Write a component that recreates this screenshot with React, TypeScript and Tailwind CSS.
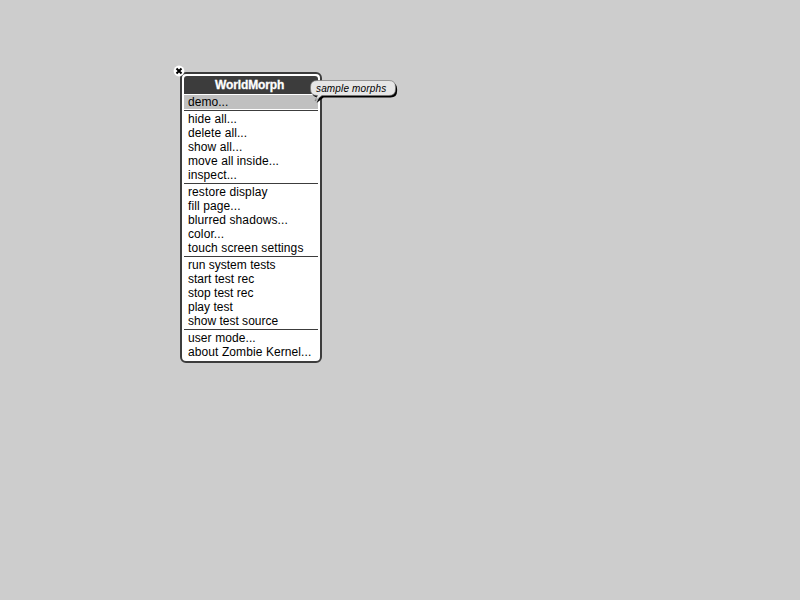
const groups = [
  ["demo..."],
  ["hide all...", "delete all...", "show all...", "move all inside...", "inspect..."],
  ["restore display", "fill page...", "blurred shadows...", "color...", "touch screen settings"],
  ["run system tests", "start test rec", "stop test rec", "play test", "show test source"],
  ["user mode...", "about Zombie Kernel..."],
];

const spacing = [
  "tracking-[0.04px]",
  "tracking-[0.09px]",
  "tracking-[0.1px]",
  "tracking-[0.01px]",
  "tracking-[0.09px]",
];

function CloseHandle() {
  return (
    <svg className="absolute -left-[7px] -top-[7px]" width="12" height="12" viewBox="0 0 12 12">
      <circle cx="6" cy="6" r="5.4" fill="#fff" />
      <path d="M3.5 3.5 8.5 8.5M8.5 3.5 3.5 8.5" stroke="#000" strokeWidth="2" />
    </svg>
  );
}

const bubble =
  "M7 1.5H79Q85.5 1.5 85.5 8V10Q85.5 16.5 79 16.5H12L5 22L7.5 16.5H7Q.5 16.5 .5 10V8Q.5 1.5 7 1.5Z";

function Hint() {
  return (
    <div className="absolute left-[310px] top-[79px] h-[26px] w-[90px]">
      <svg className="absolute left-0 top-0" width="90" height="26" viewBox="0 0 90 26">
        <path d={bubble} fill="#000" transform="translate(1.6 2.1)" />
        <path d={bubble} fill="#e6e6e6" stroke="#777" strokeWidth=".7" />
      </svg>
      <div className="relative whitespace-nowrap pl-[6px] pt-[3px] text-[10px] italic leading-[13px] tracking-[0.15px]">
        sample morphs
      </div>
    </div>
  );
}

export default function App() {
  return (
    <main className="relative h-[600px] w-[800px] overflow-hidden bg-[#cdcdcd] font-['Liberation_Sans',Arial,sans-serif] text-black">
      <div className="absolute left-[180px] top-[72px] h-[291px] w-[142px] rounded-[6px] border-2 border-[#3c3c3c] bg-white p-[2px]">
        <div className="mb-px h-[18px] rounded-t-[3px] bg-[#3c3c3c] pl-[31px] text-[12px] font-bold leading-[18px] tracking-[-0.12px] text-white [-webkit-text-stroke:0.3px_white]">
          WorldMorph
        </div>
        {groups.map((items, g) => (
          <div key={items[0]} className={spacing[g] + (g ? " mt-px border-t border-[#3c3c3c] pt-px" : "")}>
            {items.map((t) => (
              <div
                key={t}
                className={
                  "h-[14px] whitespace-nowrap pl-1 text-[12px] leading-[14px] " + (g === 0 ? "bg-[#c0c0c0]" : "")
                }
              >
                {t}
              </div>
            ))}
          </div>
        ))}
      </div>
      <div className="absolute left-[180px] top-[72px]">
        <CloseHandle />
      </div>
      <Hint />
    </main>
  );
}
